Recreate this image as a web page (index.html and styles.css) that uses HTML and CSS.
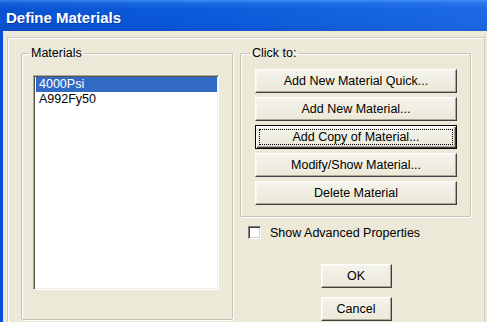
FILE: index.html
```html
<!DOCTYPE html>
<html lang="en">
<head>
    <meta charset="UTF-8">
    <title>Define Materials</title>
    <link rel="stylesheet" href="styles.css">
</head>
<body>
    <div class="window">
        <div class="titlebar">
            <span class="title">Define Materials</span>
        </div>
        <div class="client">
            <div class="panel">
                <fieldset class="group materials">
                    <legend>Materials</legend>
                    <div class="listbox">
                        <div class="item selected">4000Psi</div>
                        <div class="item">A992Fy50</div>
                    </div>
                </fieldset>
                <div class="side">
                    <fieldset class="group actions">
                        <legend>Click to:</legend>
                        <div class="action-list">
                            <button class="btn wide">Add New Material Quick...</button>
                            <button class="btn wide">Add New Material...</button>
                            <button class="btn wide focused">Add Copy of Material...</button>
                            <button class="btn wide">Modify/Show Material...</button>
                            <button class="btn wide">Delete Material</button>
                        </div>
                    </fieldset>
                    <label class="check">
                        <span class="box"></span>
                        <span>Show Advanced Properties</span>
                    </label>
                    <div class="dialog-buttons">
                        <button class="btn small">OK</button>
                        <button class="btn small">Cancel</button>
                    </div>
                </div>
            </div>
        </div>
    </div>
</body>
</html>
```

FILE: styles.css
```css
body {
    margin: 0;
    padding: 0;
    font-family: 'Liberation Sans', Arial, sans-serif;
    font-size: 12.5px;
    color: #000;
    background: #ece9d8;
    overflow: hidden;
}
.window {
    width: 487px;
    height: 322px;
    overflow: hidden;
    background: #ece9d8;
    display: flex;
    flex-direction: column;
}
.titlebar {
    height: 31px;
    flex: none;
    box-sizing: border-box;
    padding: 4px 0 0 6px;
    background:
        linear-gradient(90deg, rgba(0, 40, 160, 0.15) 0%, rgba(0, 0, 0, 0) 40%, rgba(80, 150, 255, 0.25) 100%),
        linear-gradient(180deg, #3d8cf2 0%, #1a6ae6 10%, #0b5bda 30%, #0a58d8 75%, #0c52cc 100%);
}
.title {
    display: block;
    line-height: 27px;
    font-size: 15px;
    font-weight: bold;
    color: #fff;
    text-shadow: 1px 1px 0 #0b3aa8;
}
.client {
    flex: 1;
    display: flex;
    border-left: 3px solid #0a50d6;
    padding: 6px 2px 0 4px;
    min-height: 0;
}
.panel {
    flex: 1;
    display: flex;
    gap: 7px;
    align-items: flex-start;
    border: 1px solid #cfcdbf;
    border-bottom: none;
    box-shadow: inset 1px 1px 0 #fff;
    padding: 8px 13px 0 13px;
}
.group {
    margin: 0;
    padding: 0;
    border: 1px solid #c4c2b4;
    border-radius: 2px;
    box-shadow: inset 1px 1px 0 #fff, 1px 1px 0 #fff;
    min-width: 0;
    box-sizing: border-box;
}
.group legend {
    padding: 0 2px;
    margin-left: 7px;
    line-height: 15px;
}
.actions legend {
    margin-left: 9px;
}
.materials {
    width: 212px;
    height: 274px;
    flex: none;
}
.listbox {
    margin: 14px 13px 0 11px;
    height: 215px;
    box-sizing: border-box;
    background: #fff;
    border: 1px solid;
    border-color: #aca899 #fff #fff #aca899;
    box-shadow: inset 1px 1px 0 #55534a, inset -1px -1px 0 #f1efe2;
    padding: 1px 1px 0 2px;
}
.item {
    height: 15px;
    line-height: 15px;
    padding-left: 3px;
    white-space: nowrap;
}
.item.selected {
    background: #316ac5;
    color: #fff;
}
.side {
    width: 231px;
    flex: none;
    display: flex;
    flex-direction: column;
}
.action-list {
    display: flex;
    flex-direction: column;
    gap: 4px;
    padding: 8px 0 11px 14px;
}
.btn {
    font-family: inherit;
    font-size: 12.5px;
    color: #000;
    height: 24px;
    padding: 0;
    box-sizing: border-box;
    background: linear-gradient(180deg, #f4f3ec 0%, #ece9d8 100%);
    border: 1px solid;
    border-color: #fff #404040 #404040 #fff;
    box-shadow: inset -1px -1px 0 #aca899, inset 1px 1px 0 #f8f7f1;
    border-radius: 0;
    line-height: 20px;
    text-align: center;
}
.btn.wide {
    width: 202px;
}
.btn.focused {
    border-color: #000;
    box-shadow: inset 1px 1px 0 #fff, inset -1px -1px 0 #404040, inset -2px -2px 0 #aca899;
    outline: 1px dotted #000;
    outline-offset: -5px;
}
.check {
    display: flex;
    align-items: center;
    gap: 9px;
    margin: 8px 0 0 8px;
    height: 15px;
}
.box {
    width: 13px;
    height: 13px;
    box-sizing: border-box;
    background: #fff;
    border: 1px solid;
    border-color: #808080 #fff #fff #808080;
    box-shadow: inset 1px 1px 0 #404040, inset -1px -1px 0 #d4d0c8;
}
.dialog-buttons {
    display: flex;
    flex-direction: column;
    align-items: center;
    gap: 9px;
    margin-top: 24px;
    padding-left: 1px;
}
.btn.small {
    width: 71px;
}
```
